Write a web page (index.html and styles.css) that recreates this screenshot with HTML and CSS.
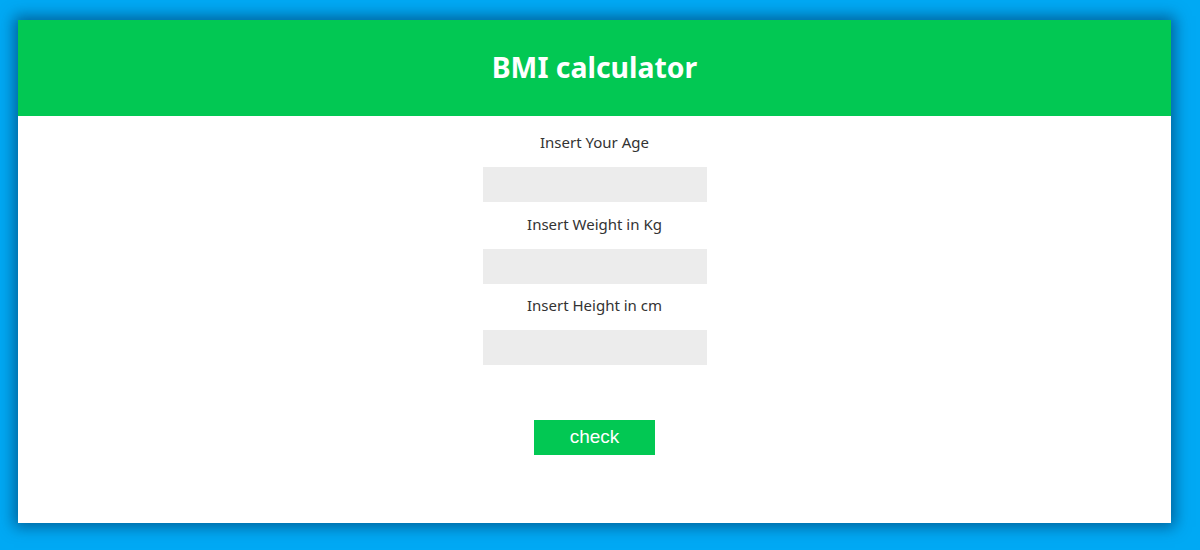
FILE: index.html
```html
<!DOCTYPE html>
<html lang="en">
<head>
<meta charset="utf-8">
<title>BMI calculator</title>
<link rel="stylesheet" href="styles.css">
</head>
<body>
<div class="stage">
  <div class="card">
    <header class="card-header">
      <h1 class="title">BMI calculator</h1>
    </header>
    <form class="form">
      <label class="field-label" for="age">Insert Your Age</label>
      <input class="field-input" id="age" type="text">
      <label class="field-label" for="weight">Insert Weight in Kg</label>
      <input class="field-input" id="weight" type="text">
      <label class="field-label" for="height">Insert Height in cm</label>
      <input class="field-input" id="height" type="text">
      <button class="check-btn" type="button">check</button>
    </form>
  </div>
</div>
</body>
</html>
```

FILE: styles.css
```css
html, body {
  margin: 0;
  padding: 0;
  height: 100%;
}
body {
  background: #00a9f4;
  font-family: "Noto Sans", "Open Sans", sans-serif;
}
.stage {
  height: 550px;
  box-sizing: border-box;
  padding: 20px 29px 27px 18px;
  display: flex;
}
.card {
  flex: 1;
  background: #ffffff;
  box-shadow: 0 0 14px 4px rgba(0, 40, 80, 0.55);
  display: flex;
  flex-direction: column;
}
.card-header {
  height: 96px;
  background: #02c853;
  display: flex;
  align-items: center;
  justify-content: center;
}
.title {
  margin: 0;
  color: #ffffff;
  font-size: 28.4px;
  font-weight: 700;
  line-height: 1;
  padding-bottom: 2px;
}
.form {
  display: flex;
  flex-direction: column;
  align-items: center;
  padding-top: 16px;
}
.field-label {
  font-size: 15px;
  line-height: 20px;
  color: #333333;
  margin-bottom: 15px;
}
.field-input {
  width: 224px;
  height: 35px;
  box-sizing: border-box;
  border: none;
  background: #ececec;
  margin: 0 0 11.5px 0;
  padding: 0;
}
.check-btn {
  margin-top: 43px;
  width: 121px;
  height: 35px;
  border: none;
  background: #02c853;
  color: #ffffff;
  font-family: "Liberation Sans", Arial, sans-serif;
  font-size: 19px;
  padding: 0;
}
```
